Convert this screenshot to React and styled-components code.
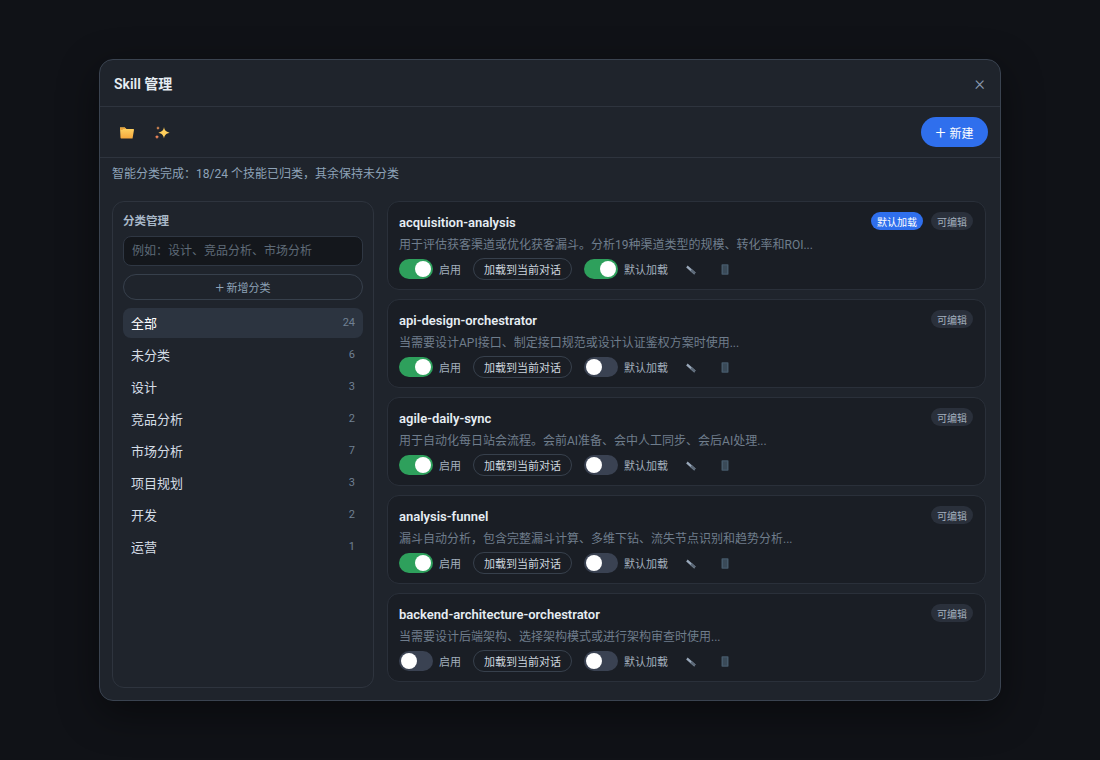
import React from "react";
import styled, { createGlobalStyle } from "styled-components";

const Global = createGlobalStyle`
  html, body { margin: 0; height: 100%; background: #101217; }
  body { font-family: Roboto, "Noto Sans CJK SC", sans-serif; }
  * { box-sizing: border-box; }
`;

const categories = [
  { name: "全部", count: 24 },
  { name: "未分类", count: 6 },
  { name: "设计", count: 3 },
  { name: "竞品分析", count: 2 },
  { name: "市场分析", count: 7 },
  { name: "项目规划", count: 3 },
  { name: "开发", count: 2 },
  { name: "运营", count: 1 },
];

const skills = [
  {
    name: "acquisition-analysis",
    desc: "用于评估获客渠道或优化获客漏斗。分析19种渠道类型的规模、转化率和ROI...",
    enabled: true,
    isDefault: true,
  },
  {
    name: "api-design-orchestrator",
    desc: "当需要设计API接口、制定接口规范或设计认证鉴权方案时使用...",
    enabled: true,
    isDefault: false,
  },
  {
    name: "agile-daily-sync",
    desc: "用于自动化每日站会流程。会前AI准备、会中人工同步、会后AI处理...",
    enabled: true,
    isDefault: false,
  },
  {
    name: "analysis-funnel",
    desc: "漏斗自动分析，包含完整漏斗计算、多维下钻、流失节点识别和趋势分析...",
    enabled: true,
    isDefault: false,
  },
  {
    name: "backend-architecture-orchestrator",
    desc: "当需要设计后端架构、选择架构模式或进行架构审查时使用...",
    enabled: false,
    isDefault: false,
  },
];

function FolderIcon() {
  return (
    <svg width="16" height="16" viewBox="0 0 16 16">
      <defs>
        <linearGradient id="folderFill" x1="0" y1="0" x2="0" y2="1">
          <stop offset="0" stopColor="#ffd666" />
          <stop offset="1" stopColor="#f5a83c" />
        </linearGradient>
      </defs>
      <path d="M1 2.500h4.800l1.600 1.600h7c.4 0 .6.300.6.700l-1.400 8.400c0 .2-.2.300-.4.300H2.200c-.4 0-.7-.3-.7-.7z" fill="url(#folderFill)" />
      <path d="M1 2.500h4.800l1.600 1.600h-3l-1.200 1H1.200z" fill="#e8a23a" />
    </svg>
  );
}

function SparkleIcon() {
  return (
    <svg width="16" height="16" viewBox="0 0 16 16">
      <path d="M10 2c.6 3.300 1.800 4.700 5.600 5.700-3.800 1-5 2.400-5.600 5.700-.6-3.300-1.800-4.700-5.600-5.700 3.800-1 5-2.400 5.600-5.700z" fill="#ffcf5c" />
      <path d="M4 1c.2 1.300.7 1.800 1.900 2.100-1.200.3-1.700.8-1.900 2.100-.2-1.300-.7-1.800-1.900-2.100 1.200-.3 1.700-.8 1.900-2.100z" fill="#f79a5a" />
      <path d="M3 9.600c.2 1.400.8 2 2.200 2.300-1.400.3-2 .9-2.200 2.300-.2-1.400-.8-2-2.200-2.300 1.400-.3 2-.9 2.200-2.300z" fill="#f58a5c" />
    </svg>
  );
}

function PencilIcon() {
  return (
    <svg width="10" height="10" viewBox="0 0 10 10">
      <path d="M1.600 0.400 9.600 7.400 8.200 9.400 0.200 2.400z" fill="#9aa9bb" />
      <path d="M5.800 4.100 9.600 7.400 8.200 9.400 4.400 6z" fill="#5d6a79" />
    </svg>
  );
}

function TrashIcon() {
  return (
    <svg width="8" height="11" viewBox="0 0 8 11">
      <rect x="0.500" y="0.300" width="7" height="10.400" rx="0.800" fill="#465a6b" />
      <path d="M3 1.500v8M5 1.500v8" stroke="#2f3b47" strokeWidth="1" />
    </svg>
  );
}

function Switch({ on }) {
  return (
    <SwitchTrack $on={on}>
      <SwitchKnob $on={on} />
    </SwitchTrack>
  );
}

function SkillCard({ skill }) {
  return (
    <Card>
      <CardHead>
        <SkillName>{skill.name}</SkillName>
        <Badges>
          {skill.isDefault && <Badge $primary>默认加载</Badge>}
          <Badge>可编辑</Badge>
        </Badges>
      </CardHead>
      <Desc>{skill.desc}</Desc>
      <Controls>
        <Switch on={skill.enabled} />
        <ControlLabel>启用</ControlLabel>
        <LoadBtn>加载到当前对话</LoadBtn>
        <Switch on={skill.isDefault} />
        <ControlLabel>默认加载</ControlLabel>
        <IconBtn><PencilIcon /></IconBtn>
        <IconBtn><TrashIcon /></IconBtn>
      </Controls>
    </Card>
  );
}

export default function App() {
  return (
    <>
      <Global />
      <Page>
        <Modal>
          <Header>
            <Title>Skill 管理</Title>
            <CloseBtn>×</CloseBtn>
          </Header>
          <Toolbar>
            <ToolIcons>
              <ToolIcon><FolderIcon /></ToolIcon>
              <ToolIcon><SparkleIcon /></ToolIcon>
            </ToolIcons>
            <NewBtn><span>+</span> 新建</NewBtn>
          </Toolbar>
          <Notice>智能分类完成：18/24 个技能已归类，其余保持未分类</Notice>
          <Body>
            <Sidebar>
              <SideTitle>分类管理</SideTitle>
              <CategoryInput placeholder="例如：设计、竞品分析、市场分析" />
              <AddCategory><span>+</span> 新增分类</AddCategory>
              <CategoryList>
                {categories.map((c, i) => (
                  <CategoryRow key={c.name} $active={i === 0}>
                    <span>{c.name}</span>
                    <Count>{c.count}</Count>
                  </CategoryRow>
                ))}
              </CategoryList>
            </Sidebar>
            <SkillList>
              {skills.map((s) => (
                <SkillCard key={s.name} skill={s} />
              ))}
            </SkillList>
          </Body>
        </Modal>
      </Page>
    </>
  );
}

const Page = styled.div`
  width: 100%;
  height: 760px;
  display: flex;
  align-items: center;
  justify-content: center;
  background: #101217;
`;

const Modal = styled.div`
  width: 902px;
  height: 642px;
  display: flex;
  flex-direction: column;
  background: #1f242c;
  border: 1px solid #3a4350;
  border-radius: 14px;
  box-shadow: 0 12px 40px rgba(0, 0, 0, 0.45);
  overflow: hidden;
`;

const Header = styled.div`
  height: 47px;
  flex: none;
  display: flex;
  align-items: center;
  justify-content: space-between;
  padding: 0 15px 0 14px;
  border-bottom: 1px solid #2e343e;
`;

const Title = styled.div`
  font-size: 14px;
  font-weight: 600;
  color: #e6edf3;
`;

const CloseBtn = styled.div`
  font-size: 20px;
  font-weight: 300;
  line-height: 20px;
  color: #8b9bb0;
`;

const Toolbar = styled.div`
  height: 51px;
  flex: none;
  display: flex;
  align-items: center;
  justify-content: space-between;
  padding: 0 12px 0 11px;
  border-bottom: 1px solid #2e343e;
`;

const ToolIcons = styled.div`
  display: flex;
  gap: 3px;
  padding-top: 2px;
`;

const ToolIcon = styled.div`
  width: 32px;
  height: 32px;
  display: flex;
  align-items: center;
  justify-content: center;
`;

const NewBtn = styled.button`
  width: 67px;
  height: 30px;
  border: 0;
  border-radius: 15px;
  background: #2f6fed;
  color: #fff;
  font-family: inherit;
  font-size: 12px;
  padding: 0;
  display: flex;
  align-items: center;
  justify-content: center;
  gap: 4px;

  span {
    font-size: 18px;
    line-height: 17px;
    font-weight: 300;
  }
`;

const Notice = styled.div`
  height: 43px;
  flex: none;
  padding: 8px 12px 0;
  font-size: 12px;
  line-height: 17px;
  color: #8ea3b8;
`;

const Body = styled.div`
  flex: 1;
  min-height: 0;
  display: flex;
  gap: 13px;
  padding: 0 14px 12px 12px;
`;

const Sidebar = styled.div`
  width: 262px;
  flex: none;
  display: flex;
  flex-direction: column;
  padding: 10px;
  border: 1px solid #2e343e;
  border-radius: 12px;
`;

const SideTitle = styled.div`
  font-size: 11.500px;
  line-height: 18px;
  font-weight: 700;
  color: #a9b8c8;
  margin-bottom: 6px;
`;

const CategoryInput = styled.input`
  width: 100%;
  height: 30px;
  flex: none;
  padding: 0 8px;
  background: #14171c;
  border: 1px solid #2f3743;
  border-radius: 8px;
  font-family: inherit;
  font-size: 12px;
  color: #e6edf3;
  outline: none;

  &::placeholder {
    color: #5f6b78;
    opacity: 1;
  }
`;

const AddCategory = styled.button`
  width: 100%;
  height: 26px;
  flex: none;
  margin-top: 8px;
  background: transparent;
  border: 1px solid #37404c;
  border-radius: 13px;
  color: #8ea3b8;
  font-family: inherit;
  font-size: 11px;
  padding: 0;

  span {
    font-size: 15px;
    font-weight: 300;
    line-height: 14px;
  }
`;

const CategoryList = styled.div`
  margin-top: 8px;
  display: flex;
  flex-direction: column;
  gap: 2px;
`;

const CategoryRow = styled.div`
  height: 30px;
  display: flex;
  align-items: center;
  justify-content: space-between;
  padding: 0 8px 1px;
  border-radius: 8px;
  font-size: 13px;
  color: ${(p) => (p.$active ? "#ffffff" : "#d5dde6")};
  background: ${(p) => (p.$active ? "#2c3440" : "transparent")};
`;

const Count = styled.span`
  font-size: 11px;
  color: #708093;
`;

const SkillList = styled.div`
  flex: 1;
  min-width: 0;
  display: flex;
  flex-direction: column;
  gap: 9px;
`;

const Card = styled.div`
  height: 89px;
  flex: none;
  padding: 9px 12px 0 11px;
  background: #1a1e25;
  border: 1px solid #2a303a;
  border-radius: 12px;
`;

const CardHead = styled.div`
  height: 20px;
  display: flex;
  align-items: center;
  justify-content: space-between;
`;

const SkillName = styled.div`
  font-size: 13px;
  font-weight: 600;
  color: #e6edf3;
  padding-top: 2px;
`;

const Badges = styled.div`
  display: flex;
  gap: 8px;
`;

const Badge = styled.div`
  height: 18px;
  padding: 0 6px;
  display: flex;
  align-items: center;
  border-radius: 9px;
  font-size: 10px;
  color: ${(p) => (p.$primary ? "#ffffff" : "#a2afbd")};
  background: ${(p) => (p.$primary ? "#2f6fed" : "#2a303b")};
`;

const Desc = styled.div`
  margin-top: 6px;
  font-size: 12px;
  line-height: 17px;
  color: #6f7d8c;
  white-space: nowrap;
`;

const Controls = styled.div`
  margin-top: 4px;
  display: flex;
  align-items: center;
`;

const SwitchTrack = styled.div`
  width: 34px;
  height: 20px;
  flex: none;
  position: relative;
  border-radius: 10px;
  background: ${(p) => (p.$on ? "#2ea05c" : "#3a4252")};
`;

const SwitchKnob = styled.div`
  position: absolute;
  top: 2px;
  left: ${(p) => (p.$on ? "16px" : "2px")};
  width: 16px;
  height: 16px;
  border-radius: 50%;
  background: #ffffff;
`;

const ControlLabel = styled.span`
  margin-left: 6px;
  font-size: 11px;
  color: #a2afbd;
`;

const LoadBtn = styled.button`
  width: 99px;
  height: 22px;
  margin: 0 12px 0 12px;
  background: transparent;
  border: 1px solid #37404c;
  border-radius: 11px;
  color: #cdd6df;
  font-family: inherit;
  font-size: 11px;
  padding: 0;
`;

const IconBtn = styled.div`
  width: 34px;
  height: 20px;
  display: flex;
  align-items: center;
  justify-content: center;

  &:nth-last-child(2) {
    margin-left: 6px;
    padding-top: 2px;
  }
`;
